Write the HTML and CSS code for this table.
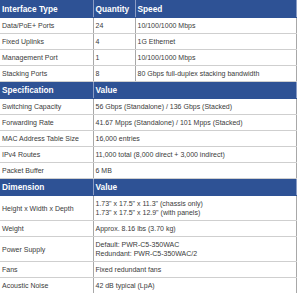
FILE: index.html
```html
<!DOCTYPE html>
<html>
<head>
<meta charset="utf-8">
<link rel="stylesheet" href="styles.css">
</head>
<body>
<table class="spec">
  <colgroup><col class="c1"><col class="c2"><col class="c3"></colgroup>
  <tr class="head"><th>Interface Type</th><th>Quantity</th><th>Speed</th></tr>
  <tr><td>Data/PoE+ Ports</td><td>24</td><td>10/100/1000 Mbps</td></tr>
  <tr><td>Fixed Uplinks</td><td>4</td><td>1G Ethernet</td></tr>
  <tr><td>Management Port</td><td>1</td><td>10/100/1000 Mbps</td></tr>
  <tr><td>Stacking Ports</td><td>8</td><td>80 Gbps full-duplex stacking bandwidth</td></tr>
  <tr class="head"><th>Specification</th><th colspan="2">Value</th></tr>
  <tr><td>Switching Capacity</td><td colspan="2">56 Gbps (Standalone) / 136 Gbps (Stacked)</td></tr>
  <tr><td>Forwarding Rate</td><td colspan="2">41.67 Mpps (Standalone) / 101 Mpps (Stacked)</td></tr>
  <tr><td>MAC Address Table Size</td><td colspan="2">16,000 entries</td></tr>
  <tr><td>IPv4 Routes</td><td colspan="2">11,000 total (8,000 direct + 3,000 indirect)</td></tr>
  <tr><td>Packet Buffer</td><td colspan="2">6 MB</td></tr>
  <tr class="head"><th>Dimension</th><th colspan="2">Value</th></tr>
  <tr><td>Height x Width x Depth</td><td colspan="2">1.73" x 17.5" x 11.3" (chassis only)<br>1.73" x 17.5" x 12.9" (with panels)</td></tr>
  <tr><td>Weight</td><td colspan="2">Approx. 8.16 lbs (3.70 kg)</td></tr>
  <tr><td>Power Supply</td><td colspan="2">Default: PWR-C5-350WAC<br>Redundant: PWR-C5-350WAC/2</td></tr>
  <tr><td>Fans</td><td colspan="2">Fixed redundant fans</td></tr>
  <tr><td>Acoustic Noise</td><td colspan="2">42 dB typical (LpA)</td></tr>
</table>
</body>
</html>
```

FILE: styles.css
```css
html, body {
  margin: 0;
  padding: 0;
  background: #ffffff;
}

.spec {
  width: 297px;
  border-collapse: collapse;
  table-layout: fixed;
  font-family: "Liberation Sans", Arial, sans-serif;
  color: #3a3a3a;
}

.c1 { width: 93px; }
.c2 { width: 42px; }

.spec td {
  font-size: 7px;
  line-height: 9px;
  padding: 3px 2px;
  border: 1px solid #cfcfcf;
  border-left: none;
  border-right: 1px solid #a8a8a8;
  vertical-align: middle;
  white-space: nowrap;
  overflow: hidden;
}

.spec th {
  background: #2e5295;
  color: #ffffff;
  font-size: 8.3px;
  font-weight: bold;
  line-height: 10px;
  padding: 3px 2px;
  text-align: left;
  border: 1px solid #2e5295;
  border-left: none;
  border-right: 1px solid #8a9cc4;
  white-space: nowrap;
}

.spec tr > :first-child {
  border-left: none;
}
```
